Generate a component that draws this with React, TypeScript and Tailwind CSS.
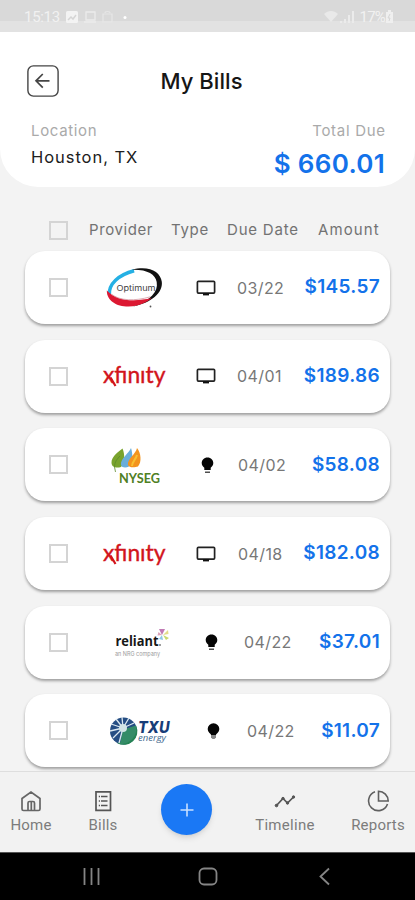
const OptimumLogo = () => (
  <svg className="w-[95px] h-[60px]" viewBox="0 0 95 60" fill="none">
    <g transform="rotate(-13 45 30)">
      <path d="M18.500 31 C20 20 32 13.500 48 13" stroke="#25b0e4" strokeWidth="3.400" />
      <path d="M46 11.500 C64 11 73.500 20 72.500 30 C71.500 41 57 48.500 39 47.500 C57 45.500 67 39 67.500 29 C68 21 61 14.500 46 11.500Z" fill="#111" />
      <path d="M17 26 C14 38 27 47.500 43 47.500 C50 47 55 46 59 43.500 C40 43.500 24 38 17 26Z" fill="#dc1832" />
      <path d="M21 31 C27 39 42 43 58 42" stroke="#d9a0aa" strokeWidth="0.800" />
    </g>
    <text x="26.500" y="33" textLength="39" lengthAdjust="spacingAndGlyphs" fill="#444" fontSize="8" fontFamily="Inter, sans-serif">
      Optimum
    </text>
    <circle cx="60.500" cy="48.500" r="0.900" fill="#555" />
  </svg>
);

const XfinityLogo = () => (
  <svg className="w-[95px] h-[60px]" viewBox="0 0 95 60" fill="none">
    <text x="13" y="36.500" textLength="62.500" lengthAdjust="spacingAndGlyphs" fill="#d2141c" stroke="#d2141c" strokeWidth="0.400" fontSize="22.500" fontFamily="Lato, sans-serif">
      xfınıty
    </text>
    <path d="M20.500 31.500 L25.500 40" stroke="#d2141c" strokeWidth="2.200" />
  </svg>
);

const NysegLogo = () => (
  <svg className="w-[95px] h-[60px]" viewBox="0 0 95 60" fill="none">
    <path d="M32.500 13.500 C30 16 21 21 21.500 28 C22 33 27 33 31 32 C35 28 35 19 32.500 13.500Z" fill="#79a32d" />
    <path d="M41 13 C39 18 30 24 31 30 C32 33 36 33 39 31.500 C43 28 43 19 41 13Z" fill="#69aedb" />
    <path d="M47 13 C46 19 37 24 38 30 C39 33 45 32.500 48 31.500 C52 27 51 18 47 13Z" fill="#f3941e" />
    <path d="M47 20 C46 24 42 27 42 31" stroke="#f8c032" strokeWidth="2" />
    <path d="M30 21 C27 24 24.500 27 24.500 32 L25.500 37" stroke="#5c8a2b" strokeWidth="0.800" />
    <text x="29" y="47.500" textLength="41" lengthAdjust="spacingAndGlyphs" fill="#4f8024" fontSize="12.500" fontWeight="700" fontFamily="Lato, sans-serif">
      NYSEG
    </text>
  </svg>
);

const ReliantLogo = () => (
  <svg className="w-[95px] h-[60px]" viewBox="0 0 95 60" fill="none">
    <text x="25.500" y="34" textLength="43" lengthAdjust="spacingAndGlyphs" fill="#171717" fontSize="15" fontWeight="700" fontFamily="Open Sans, sans-serif">
      reliant
    </text>
    <circle cx="70" cy="33" r="0.800" fill="#222" />
    <path d="M72 23 L69 17 L75 17Z" fill="#c07ab4" />
    <path d="M73 23 L78 18 L78.500 22Z" fill="#e3dc8a" />
    <path d="M73 23 L79 26 L76 28Z" fill="#c9d96e" />
    <path d="M72 23 L73 28 L69 27Z" fill="#8fc9e4" />
    <path d="M72 23 L67.500 23.500 L68.500 20Z" fill="#dba3ba" />
    <text x="25" y="44" textLength="45" lengthAdjust="spacingAndGlyphs" fill="#9a9a9a" fontSize="6" fontFamily="Inter, sans-serif">
      an NRG company
    </text>
  </svg>
);

const TxuLogo = () => (
  <svg className="w-[95px] h-[60px]" viewBox="0 0 95 60" fill="none">
    <circle cx="33.500" cy="30" r="13.500" fill="#254d83" />
    <path d="M46 24.500 A13.500 13.500 0 0 1 27 42 C38 39.500 44 32.500 46 24.500Z" fill="#258354" />
    <path d="M33 28.500 L46 24.500 C48 34.500 40 43.500 30 43Z" fill="#348c67" />
    <path
      d="M33 27 L32 16 M33 27 L39 17 M33 27 L44 22 M33 27 L26 18 M33 27 L21 23 M33 27 L20 30 M33 27 L23 37 M33 27 L29 42"
      stroke="#dbe8f0"
      strokeWidth="1.300"
    />
    <circle cx="33" cy="27" r="4" fill="#d3e5e6" />
    <text x="48" y="31.500" textLength="31.500" lengthAdjust="spacingAndGlyphs" fill="#173d78" fontSize="15.500" fontWeight="800" fontStyle="italic" fontFamily="Inter, sans-serif">
      TXU
    </text>
    <text x="48" y="40" textLength="28" lengthAdjust="spacingAndGlyphs" fill="#42698f" fontSize="8.500" fontStyle="italic" fontFamily="Open Sans, sans-serif">
      energy
    </text>
  </svg>
);

const TvIcon = () => (
  <svg className="w-5 h-5" viewBox="0 0 20 20" fill="none">
    <rect x="1.400" y="3.300" width="17.200" height="11.800" rx="1" stroke="#222" strokeWidth="1.700" />
    <path d="M7 16.300h6" stroke="#111" strokeWidth="2.200" />
  </svg>
);

const BulbIcon = () => (
  <svg className="w-[13px] h-5" viewBox="0 0 13 20">
    <path d="M6.500 2.500C3 2.500.700 5 .700 8c0 2.300 1.200 3.700 2.600 4.700V15h6.400v-2.300c1.400-1 2.600-2.400 2.600-4.700 0-3-2.300-5.500-5.800-5.500Z" fill="#050505" />
    <path d="M4 16.600h5v1.200H4z" fill="#222" />
  </svg>
);

const SmallBulbIcon = () => (
  <svg className="w-[13px] h-5" viewBox="0 0 13 20">
    <circle cx="6.500" cy="8" r="5.800" fill="#050505" />
    <path d="M3 11h7l-1 3H4z" fill="#050505" />
    <path d="M4 14h5v2.500L7.500 18h-2L4 16.500z" fill="#888" />
  </svg>
);

const Checkbox = () => (
  <span className="block w-[19px] h-[19px] shrink-0 border-2 border-[#d4d4d4]" />
);

const bills = [
  { id: 1, logo: <OptimumLogo />, icon: <TvIcon />, iconClass: "ml-[11px]", date: "03/22", dateClass: "ml-[21px] w-[46px]", amount: "$145.57", amountClass: "w-[76px]" },
  { id: 2, logo: <XfinityLogo />, icon: <TvIcon />, iconClass: "ml-[11px]", date: "04/01", dateClass: "ml-[21px] w-[44px]", amount: "$189.86", amountClass: "w-[77px]" },
  { id: 3, logo: <NysegLogo />, icon: <BulbIcon />, iconClass: "ml-[16px]", date: "04/02", dateClass: "ml-[24px] w-[48px]", amount: "$58.08", amountClass: "w-[70px]" },
  { id: 4, logo: <XfinityLogo />, icon: <TvIcon />, iconClass: "ml-[11px]", date: "04/18", dateClass: "ml-[22px] w-[44px]", amount: "$182.08", amountClass: "w-[76px]" },
  { id: 5, logo: <ReliantLogo />, icon: <BulbIcon />, iconClass: "ml-[20px]", date: "04/22", dateClass: "ml-[26px] w-[48px]", amount: "$37.01", amountClass: "w-[63px]" },
  { id: 6, logo: <TxuLogo />, icon: <SmallBulbIcon />, iconClass: "ml-[22px]", date: "04/22", dateClass: "ml-[27px] w-[48px]", amount: "$11.07", amountClass: "w-[58px]" },
];

const StatusBar = () => (
  <div className="h-8 shrink-0 flex items-start justify-between pl-6 pr-[21px] pt-2 bg-[linear-gradient(#d9d9d9_21px,#e2e2e2_21px)] text-[#f1f1f1] font-['Roboto',sans-serif] text-[15px] leading-[18px]">
    <div className="flex items-center">
      <span className="w-9 tracking-[-0.300px]">15:13</span>
      <svg className="ml-[5px] w-[62px] h-[14px]" viewBox="0 0 62 14" fill="none">
        <rect x="1" y="1" width="12" height="12" rx="1.500" fill="#f3f3f3" />
        <path d="M3 10l3-3 2 2 3-4" stroke="#d5d5d5" strokeWidth="1.500" />
        <path d="M21 2h9v8h-9zM19 12h12" stroke="#ebebeb" strokeWidth="1.300" />
        <path d="M38 4h9v8h-9zM40 3c0-2 5-2 5 0" stroke="#e6e6e6" strokeWidth="1.200" />
        <circle cx="60" cy="7.500" r="1.500" fill="white" />
      </svg>
    </div>
    <div className="flex items-center">
      <svg className="w-[33px] h-[14px] mr-1" viewBox="0 0 33 14">
        <path d="M1 4c4-4 10-4 14 0l-7 8z" fill="#e9e9e9" />
        <path d="M17 11h2v2h-2zM21 9h2v4h-2zM25 5h2v8h-2zM29 1h2v12h-2z" fill="#ebebeb" />
      </svg>
      <span className="tracking-[-0.800px]">17%</span>
      <svg className="w-[9px] h-[14px]" viewBox="0 0 9 14">
        <path d="M3 0h3v2h2v11H1V2h2z" fill="#efefef" />
        <path d="M5 4L3 8h2l-1 3" stroke="#d5d5d5" fill="none" />
      </svg>
    </div>
  </div>
);

const Header = () => (
  <header className="h-[155px] shrink-0 bg-white rounded-b-[38px] pl-[27px] pr-[30px] pt-[33px]">
    <div className="grid grid-cols-[32px_1fr_41px] items-center h-8">
      <svg className="w-8 h-8" viewBox="0 0 32 32" fill="none" stroke="#454545">
        <rect x="0.900" y="0.900" width="30.200" height="30.200" rx="5.500" strokeWidth="1.400" />
        <path d="M22.500 15.800H9M15.800 9L9 15.800l6.800 6.800" strokeWidth="1.700" />
      </svg>
      <h1 className="text-center text-[22px] font-medium leading-8 tracking-[0.050px] text-[#161616]">My Bills</h1>
    </div>
    <div className="flex justify-between mt-6 pl-1">
      <div>
        <p className="text-[15px] leading-5 tracking-[0.650px] text-[#aaa]">Location</p>
        <p className="mt-[6px] text-[16.500px] leading-5 tracking-[0.950px] text-[#202020]">Houston, TX</p>
      </div>
      <div className="text-right">
        <p className="-mr-[0.700px] text-[15px] leading-5 tracking-[0.700px] text-[#aaa]">Total Due</p>
        <p className="mt-[7px] text-[26px] leading-8 font-semibold tracking-[0.300px] text-[#1372ea]">$ 660.01</p>
      </div>
    </div>
  </header>
);

const Navigation = () => (
  <nav className="relative h-[81px] shrink-0 bg-[#f2f2f2] border-t border-[#dedede] grid grid-cols-[62px_82px_85px_112px_74px] text-center font-['Roboto',sans-serif] text-[15px] leading-[18px] text-[#7c7c7c]">
    <div className="pt-[18px]">
      <svg className="mx-auto w-[22px] h-[22px]" viewBox="0 0 22 22" fill="none" stroke="#666" strokeWidth="1.700">
        <path d="M2 8.500L11 2l9 6.500V19q0 1.500-1.500 1.500H14.500V13q0-1.500-1.500-1.500H9.500Q8 11.500 8 13v7.500H3.500Q2 20.500 2 19zM11.300 12v8.500M8 20.500h6.500" />
      </svg>
      <p className="mt-1 tracking-[0.200px]">Home</p>
    </div>
    <div className="pt-[18px]">
      <svg className="mx-auto w-[22px] h-[22px]" viewBox="0 0 22 22" fill="none" stroke="#555" strokeWidth="1.700">
        <path d="M4 1.800h14.500v18.500H4zM9 6.500h6.500M9 11h6.500M9 15.500h6.500" />
        <path d="M6.800 6.500h1.200M6.800 11h1.200M6.800 15.500h1.200" />
      </svg>
      <p className="mt-1 tracking-[0.200px]">Bills</p>
    </div>
    <div className="pt-[12px]">
      <button className="mx-auto flex w-[51px] h-[51px] items-center justify-center rounded-full bg-[#1a78f5] shadow-md">
        <svg className="w-[14px] h-[14px]" viewBox="0 0 14 14" stroke="#c8e0ff" strokeWidth="1.600">
          <path d="M7 .500v13M.500 7h13" />
        </svg>
      </button>
    </div>
    <div className="pt-[18px]">
      <svg className="mx-auto w-[22px] h-[22px]" viewBox="0 0 22 22" fill="#555" stroke="#555">
        <path d="M2.500 15.500L9 8.500l4.500 4.500L19.500 7" fill="none" strokeWidth="1.700" />
        <circle cx="2.500" cy="15.500" r="1.300" />
        <circle cx="9" cy="8.500" r="1.200" />
        <circle cx="13.500" cy="13" r="1.200" />
        <circle cx="19.500" cy="7" r="1.200" />
      </svg>
      <p className="mt-1 tracking-[0.300px]">Timeline</p>
    </div>
    <div className="pt-[18px]">
      <svg className="mx-auto w-[22px] h-[22px]" viewBox="0 0 22 22" fill="none" stroke="#606060" strokeWidth="1.600">
        <path d="M8 1.800A9.700 9.700 0 1 0 20.500 14" />
        <path d="M11.500 1.300v9.700h9.700a9.700 9.700 0 0 0-9.700-9.700z" />
      </svg>
      <p className="mt-1 tracking-[0.200px]">Reports</p>
    </div>
  </nav>
);

const SystemBar = () => (
  <div className="h-12 shrink-0 bg-black border-t border-[#555] flex items-center justify-between pl-[82px] pr-[82px]">
    <svg className="w-[19px] h-[19px]" viewBox="0 0 19 19" stroke="#858585" strokeWidth="1.800">
      <path d="M2.500 1v17M9.500 1v17M16.500 1v17" />
    </svg>
    <svg className="w-5 h-5 -ml-[3px]" viewBox="0 0 20 20" fill="none" stroke="#858585" strokeWidth="1.800">
      <rect x="1.500" y="1.500" width="17" height="16" rx="4.500" />
    </svg>
    <svg className="w-4 h-[19px]" viewBox="0 0 16 19" fill="none" stroke="#858585" strokeWidth="1.800">
      <path d="M12 1.500l-8.500 8 8.500 8" />
    </svg>
  </div>
);

const App = () => {
  return (
    <div className="w-[415px] h-[900px] flex flex-col overflow-hidden bg-[#f3f3f3] font-['Inter',sans-serif]">
      <StatusBar />
      <Header />
      <main className="flex-1 min-h-0 overflow-hidden px-[25px] pt-8">
        <div className="flex items-center h-[22px] pl-6 text-[15px] leading-[22px] text-[#727272]">
          <Checkbox />
          <span className="ml-[21px] w-[82px] tracking-[0.600px]">Provider</span>
          <span className="w-[56px] tracking-[0.700px]">Type</span>
          <span className="w-[91px] tracking-[0.800px] whitespace-nowrap">Due Date</span>
          <span className="tracking-[1.100px]">Amount</span>
        </div>
        <div className="mt-[10px] flex flex-col gap-[15.700px]">
          {bills.map((bill) => (
            <div
              key={bill.id}
              className="h-[73px] shrink-0 flex items-center rounded-[20px] bg-white pl-6 pr-[10px] shadow-[0_2px_3px_rgba(0,0,0,0.350)]"
            >
              <Checkbox />
              <div className="ml-[22px] shrink-0">{bill.logo}</div>
              <div className={`shrink-0 ${bill.iconClass}`}>{bill.icon}</div>
              <span className={`shrink-0 text-[16px] tracking-[0.400px] text-[#777] ${bill.dateClass}`}>{bill.date}</span>
              <span className={`ml-auto flex shrink-0 justify-end text-[19px] font-semibold tracking-[0.300px] text-[#1372ea] ${bill.amountClass}`}>
                {bill.amount}
              </span>
            </div>
          ))}
        </div>
      </main>
      <Navigation />
      <SystemBar />
    </div>
  );
};

export default App;
